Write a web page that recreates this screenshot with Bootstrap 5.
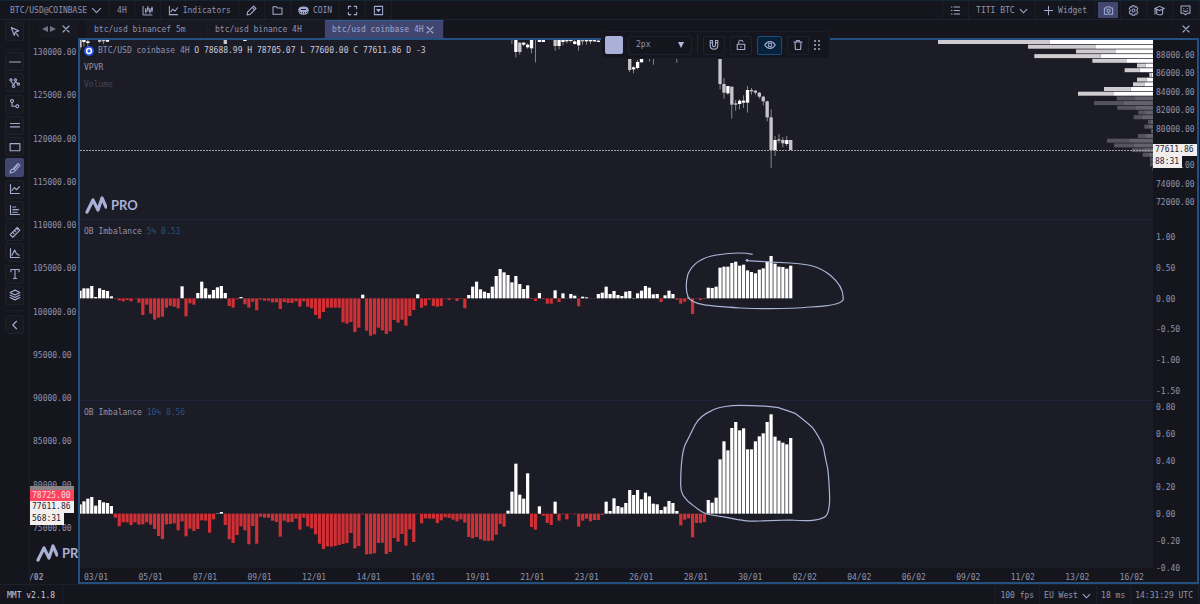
<!DOCTYPE html>
<html lang="en">
<head>
<meta charset="utf-8">
<meta name="viewport" content="width=device-width, initial-scale=1">
<title>MMT – btc/usd coinbase 4H</title>
<link rel="stylesheet" href="https://cdn.jsdelivr.net/npm/bootstrap@5.3.0/dist/css/bootstrap.min.css">
<style>
:root{--chrome:#15161d;--plot:#1c1c27;--line:#1c1f2b;--ink:#9093af;--icon:#a3abd0;--blue:#23507f;--accent:#404670}
body{background:var(--chrome);color:var(--ink);font-family:"DejaVu Sans Mono","Liberation Mono",monospace;font-size:8px;line-height:10px}
button,select{font:inherit;color:inherit;background:transparent;border:0;padding:0;border-radius:0}
svg.ic{width:12px;height:12px;fill:none;stroke:var(--icon);stroke-width:1.5;stroke-linecap:round;stroke-linejoin:round;flex:none;display:block}
.topbar{height:20px;border-top:1px solid #142634;border-bottom:1px solid #20222f;padding-right:1px}
.cell{display:flex;align-items:center;gap:4px;padding:1px 7px 0;border-right:1px solid var(--line);white-space:nowrap}
.cell svg.ic{width:11px;height:11px}
.cell-start{border-left:1px solid var(--line)}
.cell-tight{padding-left:4px;padding-right:5px}
.pick{appearance:none;padding-right:13px;background:url("data:image/svg+xml,%3Csvg xmlns='http://www.w3.org/2000/svg' viewBox='0 0 10 6'%3E%3Cpath d='M1 1l4 4 4-4' fill='none' stroke='%23a3abd0' stroke-width='1.2'/%3E%3C/svg%3E") no-repeat right center/9px 6px}
.cam-cell{padding:0 2px 0 3px}
.cam{width:20px;height:16px;background:var(--accent);display:grid;place-items:center}
.tools{width:30px;border-right:1px solid var(--line);padding:2px 6px 0 5px}
.tool{width:19px;height:19px;display:grid;place-items:center;border:1px solid #1e202c;border-radius:2px;background:#171820}
.tool.on{background:var(--accent);border-color:var(--accent)}
.tool-set{height:253px}
.rule{height:1px;background:var(--line);margin:8px 0 2px}
.rule-end{margin:5px 0 4px}
.side{width:48px}
.strip{height:18px}
.side-strip{margin-left:9px;padding-left:3px;gap:4px;background:#181920}
.side-axis{padding:10px 0 50px 3px}
.tagbox{background:#f3eeee;color:#222230;line-height:12px;padding:0 3px 0 2px;width:max-content}
.side-tags{top:448px;left:0}
.side-tags .grey{height:4px;width:44px;background:#8a8486}
.side-tags .red{background:#fb4560;color:#ffd9df;line-height:10px;padding-top:1px}
.side-logo{top:506px;left:6px}
.side-date{left:-1px;bottom:1px;font-weight:bold}
.tab-btn{padding:1px 7px 0;width:117px;text-align:left;background:#181922;border-right:1px solid #1b1d28;white-space:nowrap}
.tab-first{width:122px;padding-left:8px}
.tab-btn.on{background:var(--accent);color:#a0a7cc;border-top:1px solid #2d5e93;width:119px;padding-top:0}
.panel{border:2px solid var(--blue);display:grid;grid-template-columns:minmax(0,1fr) 44px;grid-template-rows:minmax(0,179fr) minmax(0,181fr) minmax(0,168fr) 14px;margin-right:1px}
.pane{background:var(--plot);position:relative;overflow:hidden}
.pane + .axis + .pane{border-top:1px solid #20243a}
.pane>svg{width:100%;height:100%;display:block}
.axis{display:flex;flex-direction:column;justify-content:space-between;padding-left:3px;position:relative}
.ax1{padding-top:11px;padding-bottom:11px}.ax2{padding-top:14px;padding-bottom:3px}.ax3{padding-top:3px;padding-bottom:8px;grid-row:3/5;grid-column:2}
.price-tags{left:0;top:104px}
.times{padding:5px 9px 0 4px;line-height:9px;display:flex;justify-content:space-between}
.note{position:absolute;left:4px}
.n1{top:6px}.n2{top:23px}.n3{top:40px;color:#45465a}.nb{top:7px}.nb b{font-weight:normal;color:#28537f}
.ohlc{color:#c9cbdc}
.brand{font:bold 13px/16px Lato,sans-serif;color:#a9b1d6}
.brand svg{width:22px;height:18px}
.n-brand{left:5px;bottom:5px}
.float{position:absolute;top:31px;left:601px;height:28px;padding:0 8px 0 3px;gap:5px;background:#15161d;border:1px solid #1a1c26;border-radius:3px}
.float>.fb{width:22px;height:19px;border:1px solid #1e2130;border-radius:2px;display:grid;place-items:center}
.float>.fb.on{width:25px;background:#06213b;border-color:#1b4d78}
.swatch{width:18px;height:18px;border-radius:2px;background:#a9b1d9}
.width-pick{appearance:none;width:64px;height:19px;padding:0 7px;border:1px solid #1e2130;border-radius:2px;background:url("data:image/svg+xml,%3Csvg xmlns='http://www.w3.org/2000/svg' viewBox='0 0 6 6'%3E%3Cpath d='M0 0h6L3 6z' fill='%23b4bad8'/%3E%3C/svg%3E") no-repeat 49px center/6px 6px}
.float .vr{background:#222433;opacity:1;width:1px;height:20px;align-self:center}
.foot{height:20px;border-top:1px solid #1d1f2b;padding-right:1px}
.foot .cell{padding-top:2px}
</style>
</head>
<body class="vh-100 d-flex flex-column overflow-hidden">
<header class="topbar d-flex align-items-stretch flex-shrink-0">
  <button class="cell" style="padding-left:10px">BTC/USD@COINBASE<svg class="ic" viewBox="0 0 16 16"><path d="M2 5l6 6 6-6"/></svg></button>
  <button class="cell">4H</button>
  <button class="cell" aria-label="Chart type"><svg class="ic" viewBox="0 0 16 16"><path d="M1.500 2v12.500h13M5.500 5v7M8.500 2v7M11.500 5v7M14.500 3v7" stroke-width="1.400"/><path d="M5.500 7v3M8.500 4v3M11.500 7v3M14.500 4v4" stroke-width="2.400" stroke-linecap="butt"/></svg></button>
  <button class="cell"><svg class="ic" viewBox="0 0 16 16"><path d="M2 2v12h12M4 10l3-4 3 3 4-5"/></svg>Indicators</button>
  <button class="cell" aria-label="Draw"><svg class="ic" viewBox="0 0 16 16"><path d="M1.500 14.500l1-4.500 8.500-8.500 3.500 3.500-8.500 8.500zM9 3.500l3.500 3.500"/></svg></button>
  <button class="cell" aria-label="Open"><svg class="ic" viewBox="0 0 16 16"><path d="M1.500 2.500h4.500l2 2h6.500v9h-13z"/></svg></button>
  <button class="cell"><svg class="ic" viewBox="0 0 16 16"><ellipse cx="8" cy="6.500" rx="6.500" ry="3.500" fill="#a3abd0"/><path d="M1.500 6.500v3c0 5 13 5 13 0v-3M5 10v3M8 10v3M11 10v3"/><path d="M5 6.500h6" stroke="#15161d"/></svg>COIN</button>
  <button class="cell" aria-label="Full screen"><svg class="ic" viewBox="0 0 16 16"><path d="M2 5.500V2h3.500M10.500 2H14v3.500M14 10.500V14h-3.500M5.500 14H2v-3.500"/></svg></button>
  <button class="cell" aria-label="Save menu"><svg class="ic" viewBox="0 0 16 16"><rect x="2" y="2" width="12" height="12"/><path d="M5.500 6.500h5L8 9.500z" fill="#a3abd0"/></svg></button>
  <div class="d-flex ms-auto">
    <button class="cell cell-start" aria-label="List"><svg class="ic" viewBox="0 0 16 16"><path d="M6 3h8M6 8h8M6 13h8M2 3h1M2 8h1M2 13h1"/></svg></button>
    <div class="cell"><select class="pick" aria-label="Layout"><option>TITI BTC</option></select></div>
    <button class="cell"><svg class="ic" viewBox="0 0 16 16"><path d="M8 2v12M2 8h12"/></svg>Widget</button>
    <div class="cell cam-cell"><button class="cam" aria-label="Screenshot"><svg class="ic" viewBox="0 0 16 16"><path d="M2 4.500h3L6 2.500h4l1 2h3v9H2z"/><circle cx="8" cy="8.500" r="2.300"/></svg></button></div>
    <button class="cell" aria-label="Settings"><svg class="ic" viewBox="0 0 16 16"><path d="M6.300 1h3.400l.6 2.200 2.200-.6 1.700 2.900L12.600 8l1.600 2.500-1.700 2.900-2.200-.6-.6 2.200H6.300l-.6-2.200-2.200.6-1.700-2.900L3.400 8 1.800 5.500l1.700-2.900 2.200.6z"/><circle cx="8" cy="8" r="2.200"/></svg></button>
    <button class="cell" aria-label="Learn"><svg class="ic" viewBox="0 0 16 16"><path d="M1 5l7-3 7 3-7 3zM4 7v6c3 2 6 2 8.500 0V7M1.500 6v7"/></svg></button>
    <button class="cell" aria-label="Chat"><svg class="ic" viewBox="0 0 16 16"><path d="M1.500 1.500h13v10.500H10.500L8 14.500 5.500 12h-4zM5.500 5v.5M10.500 5v.5M5 8.500q3 1.500 6 0"/></svg></button>
  </div>
</header>

<div class="d-flex flex-grow-1 overflow-hidden" style="min-height:0">
  <nav class="tools flex-shrink-0" aria-label="Drawing tools">
    <button class="tool" aria-label="Select"><svg class="ic" viewBox="0 0 16 16"><path d="M3 2l10 4.500-4.500 1.500L7 12.500zM9 9l3.500 4.500"/></svg></button>
    <div class="rule"></div>
    <div class="tool-set d-flex flex-column justify-content-between" id="tools"></div>
    <div class="rule rule-end"></div>
    <button class="tool" aria-label="Collapse"><svg class="ic" viewBox="0 0 16 16"><path d="M10 3L5 8l5 5"/></svg></button>
  </nav>

  <section class="side d-flex flex-column flex-shrink-0">
    <div class="strip side-strip d-flex align-items-center">
      <svg width="14" height="8" viewBox="0 0 14 8" fill="#6f7288"><path d="M6 1v6L0 4zM8 1v6l6-3z"/></svg>
      <svg class="ic" viewBox="0 0 16 16"><path d="M4 4l8 8M12 4l-8 8"/></svg>
    </div>
    <div class="position-relative overflow-hidden flex-grow-1">
      <div class="side-axis h-100 d-flex flex-column justify-content-between" id="sideAxis"></div>
      <div class="side-tags position-absolute"><div class="grey"></div><div class="tagbox red">78725.00</div><div class="tagbox">77611.86</div><div class="tagbox">568:31</div></div>
      <div class="side-logo brand position-absolute d-flex align-items-center gap-1"><svg viewBox="0 0 22 18"><path d="M2 16L8 4l5 10 4-12 4 9" fill="none" stroke="#a9b1d6" stroke-width="3.200" stroke-linejoin="round" stroke-linecap="round"/></svg>PRO</div>
      <div class="side-date position-absolute">/02</div>
    </div>
  </section>

  <main class="flex-grow-1 d-flex flex-column" style="min-width:0">
    <div class="strip d-flex align-items-stretch flex-shrink-0 ps-2">
      <button class="tab-btn tab-first">btc/usd binancef 5m</button>
      <button class="tab-btn">btc/usd binance 4H</button>
      <button class="tab-btn on d-flex align-items-center justify-content-between">btc/usd coinbase 4H<svg class="ic" viewBox="0 0 16 16"><path d="M4 4l8 8M12 4l-8 8"/></svg></button>
      <button class="ms-auto px-2" aria-label="Close widget"><svg class="ic" viewBox="0 0 16 16"><path d="M4 4l8 8M12 4l-8 8"/></svg></button>
    </div>
    <div class="panel flex-grow-1">
      <div class="pane">
        <svg viewBox="0 0 3219 537" preserveAspectRatio="none" id="price"></svg>
        <div class="note n1 d-flex align-items-center gap-1"><svg width="10" height="10" viewBox="0 0 10 10"><circle cx="5" cy="5" r="5" fill="#2459e8"/><circle cx="5" cy="5" r="2.400" fill="none" stroke="#fff" stroke-width="1.500"/></svg><span>BTC/USD coinbase 4H <span class="ohlc">O 78688.99 H 78705.07 L 77600.00 C 77611.86 D -3</span></span></div>
        <div class="note n2">VPVR</div><div class="note n3">Volume</div>
        <div class="note n-brand brand d-flex align-items-center gap-1"><svg viewBox="0 0 22 18"><path d="M2 16L8 4l5 10 4-12 4 9" fill="none" stroke="#a9b1d6" stroke-width="3.200" stroke-linejoin="round" stroke-linecap="round"/></svg>PRO</div>
      </div>
      <div class="axis ax1"><span>88000.00</span><span>86000.00</span><span>84000.00</span><span>82000.00</span><span>80000.00</span><span>&nbsp;</span><span>76000.00</span><span>74000.00</span><span>72000.00</span>
        <div class="price-tags position-absolute"><div class="tagbox">77611.86</div><div class="tagbox">88:31</div></div></div>
      <div class="pane"><svg viewBox="0 0 3219 540" preserveAspectRatio="none" id="imb5"></svg><div class="note nb">OB Imbalance <b>5% 0.53</b></div></div>
      <div class="axis ax2"><span>1.00</span><span>0.50</span><span>0.00</span><span>-0.50</span><span>-1.00</span><span>-1.50</span></div>
      <div class="pane"><svg viewBox="0 3 3219 501" preserveAspectRatio="none" id="imb10"></svg><div class="note nb">OB Imbalance <b>10% 0.56</b></div></div>
      <div class="axis ax3"><span>0.80</span><span>0.60</span><span>0.40</span><span>0.20</span><span>0.00</span><span>-0.20</span><span>-0.40</span></div>
      <div class="times" id="times"></div>
    </div>
  </main>
</div>

<div class="float d-flex align-items-center">
  <button class="swatch" aria-label="Line colour"></button>
  <select class="width-pick" aria-label="Line width"><option>2px</option></select>
  <div class="vr"></div>
  <button class="fb" aria-label="Magnet"><svg class="ic" viewBox="0 0 16 16"><path d="M3 2h3v6c0 3 4 3 4 0V2h3v7c0 6-10 6-10 0zM3 5h3M10 5h3"/></svg></button>
  <button class="fb" aria-label="Lock"><svg class="ic" viewBox="0 0 16 16"><path d="M3 7h10v7H3zM5 7V4c0-3 5-3 5.500-.5M8 10v1"/></svg></button>
  <button class="fb on" aria-label="Visible"><svg class="ic" viewBox="0 0 16 16"><path d="M1 8c3.500-6 10.500-6 14 0-3.500 6-10.500 6-14 0z"/><circle cx="8" cy="8" r="2.300"/></svg></button>
  <button class="fb" aria-label="Delete"><svg class="ic" viewBox="0 0 16 16"><path d="M2.500 4h11M6 4V2h4v2M4 4l.5 10h7L12 4"/></svg></button>
  <svg width="7" height="12" viewBox="0 0 7 12" fill="#85879b"><path d="M0 1h2v2H0zM4 1h2v2H4zM0 5h2v2H0zM4 5h2v2H4zM0 9h2v2H0zM4 9h2v2H4z"/></svg>
</div>

<footer class="foot d-flex align-items-stretch flex-shrink-0">
  <div class="cell ohlc">MMT v2.1.8</div>
  <div class="ms-auto cell cell-start cell-tight">100 fps</div>
  <div class="cell cell-tight"><select class="pick" aria-label="Region"><option>EU West</option></select></div>
  <div class="cell cell-tight">18 ms</div>
  <div class="cell cell-tight">14:31:29 UTC</div>
</footer>

<script src="https://cdn.jsdelivr.net/npm/bootstrap@5.3.0/dist/js/bootstrap.bundle.min.js"></script>
<script>
const STEP = 11.78, $ = id => document.getElementById(id);
const rect = (x, y, w, h, f) => `<rect x="${x}" y="${y}" width="${w}" height="${h}" fill="${f}"/>`;
const stroke = d => `<path d="${d}" fill="none" stroke="#a9b4d6" stroke-width="1.200" vector-effect="non-scaling-stroke"/>`;

const tools = [
 ['Line','M0 8h16'],
 ['Pattern','M2.500 2.500a1.500 1.500 0 1 0 .1 0M8.500 2.500a1.500 1.500 0 1 0 .1 0M6 11a1.500 1.500 0 1 0 .1 0M3 6l3 4.500L8.500 6l3.500 3M12.500 8a1.500 1.500 0 1 0 .1 0'],
 ['Path','M4 2a2 2 0 1 0 .1 0M4 6v5h5M11 9a2 2 0 1 0 .1 0'],
 ['Channel','M2 6h12M2 10.500h12'],
 ['Rectangle','M1.500 3.500h13v9.500h-13z'],
 ['Brush','M1.500 14.500c0-3 1-4.500 3.500-5L12 2l2.500 2.500L8 12c-1.500 2-3.500 2.500-6.500 2.500zM6 9l2.500 2.500M11 5L7.500 8.500'],
 ['Chart','M2 2v12h12M4 10l3-4 3 3 4-4'],
 ['Profile','M2 2v12h12M5 4h4M5 7.500h8M5 11h6'],
 ['Ruler','M1.500 11.500l9.500-9.500 3.500 3.500-9.500 9.500zM5 8.500l1.500 1.500M7.500 6L9 7.500M10 3.500L11.500 5'],
 ['Forecast','M2 2v12h12M4 11l3.500-7 2.500 5 3.500 2'],
 ['Text','M2.500 5V2h11v3M8 2v12M6 14h4'],
 ['Layers','M8 1.500l6.500 3.200L8 8 1.500 4.700zM1.500 8L8 11.200 14.500 8M1.500 11.200L8 14.500l6.500-3.300']];
$('tools').innerHTML = tools.map(([n, d]) =>
 `<button class="tool ${n === 'Brush' ? 'on' : ''}" aria-label="${n}"><svg class="ic" viewBox="0 0 16 16"><path d="${d}"/></svg></button>`).join('');

for (let p = 130000; p >= 75000; p -= 5000) $('sideAxis').innerHTML += `<span>${p}.00</span>`;
$('times').innerHTML = '03/01 05/01 07/01 09/01 12/01 14/01 16/01 19/01 21/01 23/01 26/01 28/01 30/01 02/02 04/02 06/02 09/02 11/02 13/02 16/02'
 .split(' ').map(t => `<span>${t}</span>`).join('');

function bars(values, base) {
 return values.map((v, i) => {
  const h = Math.max(Math.abs(v), 1), up = v > 0;
  return rect(STEP * i - 4.8, up ? base - h : base, 9.6, h, up ? '#fff' : '#cf3036');
 }).join('');
}
const imb5 = [23,30,30,37,4,30,25,22,6,0,-6,-9,-5,-9,0,-13,-50,-19,-46,-64,-58,-55,-28,-22,-25,-30,36,-54,-15,-19,16,50,30,11,25,33,37,16,-23,-28,-3,4,-18,-28,-10,-36,-4,-7,-7,-12,-12,-32,-11,-14,-14,-9,-25,-9,-25,-30,-50,-61,-41,-28,-28,-28,-28,-72,-76,-71,-101,-88,11,-97,-112,-108,-88,-96,-107,-99,-65,-73,-64,-82,-53,-35,12,-28,-22,-4,-23,-25,-23,-1,-5,-1,-8,-2,-30,10,35,50,27,20,16,35,67,88,78,70,48,67,43,28,39,-2,-8,16,-2,-16,-16,24,-11,15,0,13,8,-24,5,3,0,0,13,17,35,13,22,10,7,20,22,1,15,23,37,32,12,13,-11,9,23,13,-4,-16,-10,2,-47,0,-5,-2,32,31,35,92,95,95,106,110,98,101,84,79,75,86,90,110,127,104,95,94,89,98];
const imb10 = [28,37,45,50,24,41,34,32,23,-12,-38,-26,-26,-34,-26,-33,-32,-26,-33,-46,-67,-76,-32,-31,-29,-50,-23,-68,-45,-52,-46,-20,-21,-57,-17,1,5,-34,-77,-88,-64,-38,-50,-92,-37,-90,-9,-12,-12,-21,-25,-69,-21,-26,-25,-15,-48,-12,-38,-44,-62,-90,-106,-98,-99,-97,-94,-91,-88,-58,-104,-97,-2,-122,-121,-119,-88,-87,-121,-115,-73,-84,-61,-96,-47,-85,0,-29,-14,-15,-15,-28,-20,-11,-13,-18,-23,-17,-27,-70,-74,-70,-77,-81,-82,-81,-63,-31,-39,9,66,150,57,45,121,-40,-48,22,-6,-28,-34,36,-21,-2,-17,-1,-2,-39,-21,-15,-23,-19,-19,-4,36,8,46,23,19,32,71,56,71,43,63,52,30,28,11,21,38,32,8,-35,-18,-14,-71,-28,-28,-25,41,33,48,163,217,190,257,275,250,256,193,193,217,232,241,275,298,231,219,213,208,227];
$('imb5').innerHTML = bars(imb5, 235) + stroke('M2018 103C1995 98 1960 97 1910 105C1870 111 1838 130 1824 162C1817 187 1816 210 1825 233C1838 254 1880 258 1980 264C2080 268 2140 266 2190 261C2240 259 2282 252 2289 240C2292 218 2280 190 2250 165C2215 138 2185 132 2130 129C2080 126 2050 125 2000 122') + '<circle cx="2001" cy="121" r="4" fill="#a9b4d6"/>';
$('imb10').innerHTML = bars(imb10, 341) + stroke('M1980 16C1950 16 1910 22 1895 32Q1860 47 1845 75L1815 135Q1802 170 1802 255C1802 280 1810 290 1825 305C1860 332 1870 343 1895 345L1940 352C1990 362 2000 364 2040 363L2130 360C2190 364 2215 362 2232 352Q2249 345 2249 295Q2247 235 2243 205Q2234 165 2230 140Q2215 105 2195 80Q2165 55 2145 40Q2115 30 2095 23Q2050 16 1980 16');

// index, high, open/close top, open/close bottom, low, rising
const candles = [[110,0,0,1,12,0],[111,0,0,36,52,1],[112,6,8,36,44,0],[113,6,8,14,18,1],[114,10,14,22,26,1],[115,0,0,25,40,1],[116,0,0,1,67,0],[117,0,0,6,6,1],[118,0,0,6,6,1],[121,0,0,18,32,0],[122,0,0,18,28,1],[123,0,0,6,16,1],[124,0,0,4,10,1],[125,0,0,3,8,1],[126,0,4,12,14,1],[127,0,0,16,32,1],[128,0,0,4,14,0],[129,0,0,4,14,1],[130,0,0,4,12,1],[131,0,0,4,6,1],[132,0,2,6,6,1],[140,30,30,90,96,0],[141,78,82,88,100,1],[142,60,66,84,88,1],[143,50,56,67,67,1],[145,50,50,54,65,0],[146,50,50,54,74,1],[152,50,50,54,68,0],[163,30,30,132,148,0],[164,114,132,158,176,0],[165,138,138,160,165,1],[166,140,140,194,236,0],[167,180,190,194,212,0],[168,178,182,192,208,1],[169,166,182,188,204,1],[170,138,150,188,218,1],[171,144,150,154,164,0],[172,150,152,158,164,0],[173,156,158,170,176,0],[174,168,170,184,196,0],[175,182,184,232,244,0],[176,208,232,330,384,0],[177,288,300,330,348,1],[178,282,298,302,310,0],[179,292,300,310,322,0],[180,288,300,312,318,1],[181,300,300,330,330,0],
 [0,0,0,22,30,0],[1,0,0,6,20,1],[2,0,4,9,20,1],[5,0,0,5,8,0],[6,0,0,4,12,0],[7,0,0,5,6,1],[37,0,0,12,12,0],[42,0,0,3,3,1]];
let out = candles.map(([i, hi, a, b, lo, up]) => {
 const c = up ? '#fff' : '#c8c5ca', x = STEP * i;
 return rect(x - 1, hi, 2, lo - hi, '#b9b7c0') + (b - a > 2 ? rect(x - 5, a, 10, b - a, c) : '');
}).join('');
// volume profile rows: [sell edge, buy edge]
const profile = [[294,628],[564,768],[708,828],[583,782],[757,861],[891,917],[854,899],[928,935],[891,920],[879,913],[792,872],[714,822],[830,885],[762,850],[832,888],[895,915],[881,905],[924,932],[913,925],[933,936],[894,918],[801,870],[822,880],[876,910],[908,925],[930,935],[930,935],[937,938]];
out += profile.map(([s, b], r) => {
 const y = r * 14.1, dim = r > 11;
 return rect(s + 2280, y, b - s, 12, dim ? '#55545e' : '#cfcbcf') + rect(b + 2280, y, 939 - b, 12, dim ? '#64636c' : '#fff');
}).join('');
out += '<path d="M0 331.500H3219" stroke="#a09fa8" stroke-width="1" stroke-dasharray="2 1" vector-effect="non-scaling-stroke"/>';
$('price').innerHTML = out;
</script>
</body>
</html>
